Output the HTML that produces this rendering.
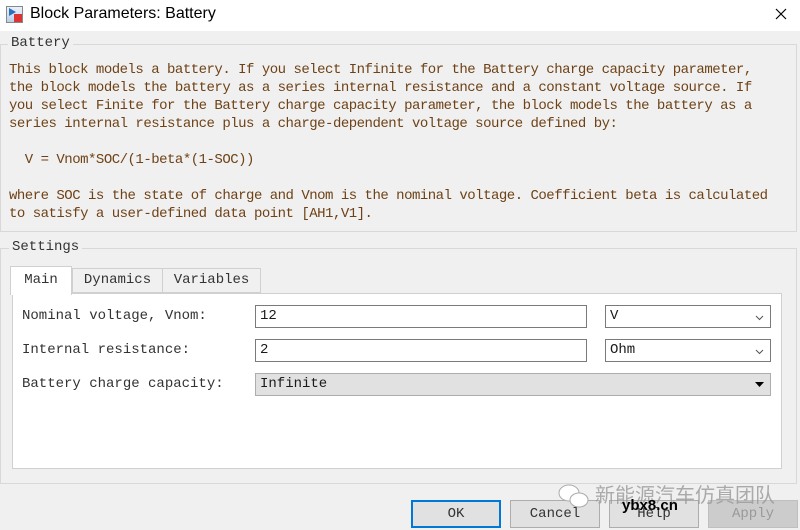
<!DOCTYPE html>
<html><head><meta charset="utf-8"><style>
*{margin:0;padding:0;box-sizing:border-box}
body{width:800px;height:530px;background:#f0f0f0;position:relative;overflow:hidden;font-family:"Liberation Mono","Noto Sans CJK SC",monospace;font-size:13.2px;color:#1a1a1a}
.a{position:absolute}
.title{top:0;left:0;width:800px;height:31px;background:#fff}
.grp{border:1px solid #d8d8d8}
.lg{background:#f0f0f0;padding:0 3px;font-size:14px;color:#333}
.t{white-space:pre;line-height:18px;color:#6e4216;font-size:14px;letter-spacing:-0.5px}
.in{background:#fff;border:1px solid #7a7a7a;height:23px;line-height:21px;padding-left:4px;font-size:14px}
.btn{border:1px solid #adadad;background:#e1e1e1;height:28px;text-align:center;line-height:26px;font-size:14px;color:#333}
</style></head><body>
<div class="a title">
  <div class="a" style="left:6px;top:6px;width:17px;height:17px;border:1px solid #888;background:linear-gradient(#eaf2fb,#b9d0ea)"></div>
  <div class="a" style="left:9px;top:8px;width:0;height:0;border-left:7px solid #2a6fc0;border-top:4px solid transparent;border-bottom:4px solid transparent"></div>
  <div class="a" style="left:14px;top:14px;width:8px;height:8px;background:#d33"></div>
  <div class="a" style="left:30px;top:5px;font-family:'Liberation Sans',sans-serif;font-size:16px;color:#000">Block Parameters: Battery</div>
  <svg class="a" style="left:775px;top:8px" width="12" height="12"><path d="M1 1L11 11M11 1L1 11" stroke="#000" stroke-width="1.2"/></svg>
</div>
<div class="a grp" style="left:0;top:44px;width:797px;height:188px"></div>
<div class="a lg" style="left:8px;top:35px">Battery</div>
<div class="a t" style="left:9px;top:61px">This block models a battery. If you select Infinite for the Battery charge capacity parameter,
the block models the battery as a series internal resistance and a constant voltage source. If
you select Finite for the Battery charge capacity parameter, the block models the battery as a
series internal resistance plus a charge-dependent voltage source defined by:

  V = Vnom*SOC/(1-beta*(1-SOC))

where SOC is the state of charge and Vnom is the nominal voltage. Coefficient beta is calculated
to satisfy a user-defined data point [AH1,V1].</div>
<div class="a grp" style="left:0;top:248px;width:797px;height:236px"></div>
<div class="a lg" style="left:9px;top:239px">Settings</div>
<div class="a" style="left:12px;top:293px;width:770px;height:176px;background:#fff;border:1px solid #d0d0d0"></div>
<div class="a" style="left:10px;top:266px;width:62px;height:29px;background:#fff;border:1px solid #d0d0d0;border-bottom:none;text-align:center;line-height:26px;font-size:14px;color:#333">Main</div>
<div class="a" style="left:72px;top:268px;width:91px;height:25px;border:1px solid #d0d0d0;text-align:center;line-height:23px;font-size:14px;color:#333">Dynamics</div>
<div class="a" style="left:162px;top:268px;width:99px;height:25px;border:1px solid #d0d0d0;text-align:center;line-height:23px;font-size:14px;color:#333">Variables</div>
<div class="a" style="left:22px;top:308px;font-size:14px;color:#333">Nominal voltage, Vnom:</div>
<div class="a" style="left:22px;top:342px;font-size:14px;color:#333">Internal resistance:</div>
<div class="a" style="left:22px;top:376px;font-size:14px;color:#333">Battery charge capacity:</div>
<div class="a in" style="left:255px;top:305px;width:332px">12</div>
<div class="a in" style="left:255px;top:339px;width:332px">2</div>
<div class="a in" style="left:605px;top:305px;width:166px">V<svg class="a" style="right:6px;top:9px" width="9" height="6"><path d="M1 1L4.5 4.5L8 1" stroke="#555" fill="none"/></svg></div>
<div class="a in" style="left:605px;top:339px;width:166px">Ohm<svg class="a" style="right:6px;top:9px" width="9" height="6"><path d="M1 1L4.5 4.5L8 1" stroke="#555" fill="none"/></svg></div>
<div class="a in" style="left:255px;top:373px;width:516px;background:#e1e1e1;border-color:#adadad">Infinite<svg class="a" style="right:6px;top:8px" width="9" height="6"><path d="M0 0H9L4.5 5Z" fill="#000"/></svg></div>
<div class="a btn" style="left:411px;top:500px;width:90px;border:2px solid #0078d7;line-height:24px">OK</div>
<div class="a btn" style="left:510px;top:500px;width:90px">Cancel</div>
<div class="a btn" style="left:609px;top:500px;width:90px">Help</div>
<div class="a btn" style="left:708px;top:500px;width:90px;background:#ccc;border-color:#bfbfbf;color:#999">Apply</div>
<svg class="a" style="left:557px;top:483px" width="34" height="26"><ellipse cx="12" cy="10" rx="10" ry="8" fill="#fff" stroke="#aaa"/><ellipse cx="22" cy="17" rx="9" ry="7" fill="#fff" stroke="#aaa"/></svg>
<div class="a" style="left:595px;top:479px;font-family:'Noto Sans CJK SC',sans-serif;font-size:20px;color:#999;opacity:.8">新能源汽车仿真团队</div>
<div class="a" style="left:622px;top:497px;font-family:'Liberation Sans',sans-serif;font-size:15px;color:#000;font-weight:bold">ybx8.cn</div>
</body></html>
